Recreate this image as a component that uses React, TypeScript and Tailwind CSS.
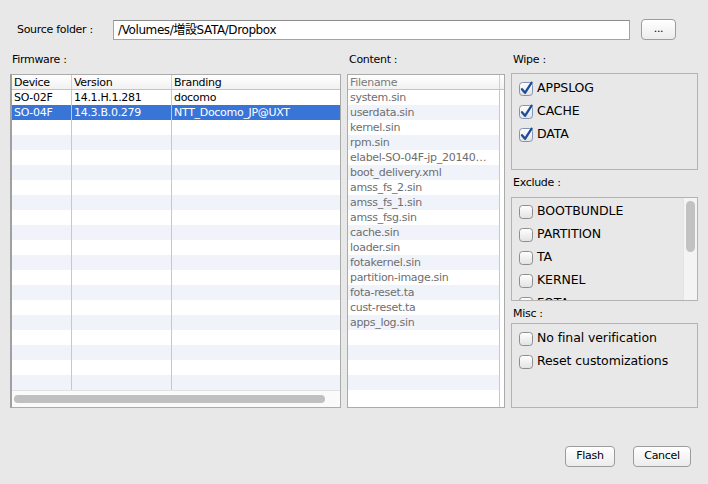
import React from "react";

const firmwareRows = [
  { device: "SO-02F", version: "14.1.H.1.281", branding: "docomo", selected: false },
  { device: "SO-04F", version: "14.3.B.0.279", branding: "NTT_Docomo_JP@UXT", selected: true },
];

const files = [
  "system.sin",
  "userdata.sin",
  "kernel.sin",
  "rpm.sin",
  "elabel-SO-04F-jp_20140…",
  "boot_delivery.xml",
  "amss_fs_2.sin",
  "amss_fs_1.sin",
  "amss_fsg.sin",
  "cache.sin",
  "loader.sin",
  "fotakernel.sin",
  "partition-image.sin",
  "fota-reset.ta",
  "cust-reset.ta",
  "apps_log.sin",
];

function CheckBox({ checked }: { checked: boolean }) {
  return (
    <svg width="16" height="16" viewBox="0 0 16 16" className="shrink-0">
      <defs>
        <linearGradient id="cbgrad" x1="0" y1="0" x2="0" y2="1">
          <stop offset="0" stopColor="#ffffff" />
          <stop offset="1" stopColor="#e2e2e2" />
        </linearGradient>
      </defs>
      <rect
        x="1.5"
        y="1.5"
        width="13"
        height="13"
        rx="3"
        fill="url(#cbgrad)"
        stroke={checked ? "#7f93b4" : "#8e8e8e"}
      />
      {checked && (
        <path
          d="M4 8.2 L7 11.8 L13.6 1.6"
          fill="none"
          stroke="#1f4c99"
          strokeWidth="2.3"
          strokeLinecap="round"
          strokeLinejoin="round"
        />
      )}
    </svg>
  );
}

function CheckRow({ label, checked }: { label: string; checked: boolean }) {
  return (
    <div className="flex items-center h-[23px] gap-[3px] text-[12.5px] tracking-[-0.1px] whitespace-nowrap">
      <CheckBox checked={checked} />
      <span>{label}</span>
    </div>
  );
}

export default function App() {
  const stripes = Array.from({ length: 20 });
  return (
    <div className="w-[708px] h-[484px] bg-[#e8e8e8] overflow-hidden font-['DejaVu_Sans','Noto_Sans_CJK_JP',sans-serif] text-[11px] tracking-[-0.3px] text-black">
      {/* Source folder row */}
      <div className="flex items-center h-[21px] mt-[19px]">
        <div className="ml-[17px] w-[96px] leading-[14px]">Source folder :</div>
        <div className="w-[517px] h-[20px] bg-white border border-[#a3a3a3] border-t-[#8c8c8c] flex items-center pl-[4px] text-[12px] tracking-[-0.4px] whitespace-nowrap">
          /Volumes/増設SATA/Dropbox
        </div>
        <div className="ml-[11px] w-[35px] h-[21px] rounded-[4px] border border-[#9c9c9c] bg-gradient-to-b from-white to-[#ececec] flex items-center justify-center leading-none pb-[3px]">
          ...
        </div>
      </div>

      {/* Main columns */}
      <div className="flex mt-[13px] ml-[10px]">
        {/* Firmware */}
        <div className="w-[331px]">
          <div className="h-[14px] leading-[14px] pl-[2px]">Firmware :</div>
          <div className="mt-[7px] h-[334px] border border-[#ababab] border-l-2 border-l-[#a0a0a0] bg-white relative overflow-hidden">
            <div className="flex h-[15px] border-b border-[#c4c4c4] bg-gradient-to-b from-white to-[#f1f1f1] leading-[15px]">
              <div className="w-[60px] pl-[2px] border-r border-[#cfcfcf]">Device</div>
              <div className="w-[100px] pl-[2px] border-r border-[#cfcfcf]">Version</div>
              <div className="flex-1 pl-[2px]">Branding</div>
            </div>
            <div className="h-[300px]">
              {stripes.map((_, i) => {
                const r = firmwareRows[i];
                const sel = r?.selected;
                const bg = sel ? "bg-[#3875d7] text-white" : i % 2 === 1 ? "bg-[#f0f4fa]" : "bg-white";
                return (
                  <div key={i} className={`flex h-[15px] leading-[15px] whitespace-nowrap ${bg}`}>
                    <div className="w-[60px] pl-[2px] border-r border-[#c8c8c8]">{r?.device ?? ""}</div>
                    <div className="w-[100px] pl-[2px] border-r border-[#c8c8c8]">{r?.version ?? ""}</div>
                    <div className="flex-1 pl-[2px]">{r?.branding ?? ""}</div>
                  </div>
                );
              })}
            </div>
            <div className="h-[17px] border-t border-[#e2e2e2] bg-[#fafafa] flex items-center pl-[2px]">
              <div className="w-[311px] h-[8px] rounded-full bg-[#c0c0c0]" />
            </div>
          </div>
        </div>

        {/* Content */}
        <div className="ml-[6px] w-[158px]">
          <div className="h-[14px] leading-[14px] pl-[2px]">Content :</div>
          <div className="mt-[7px] h-[334px] border border-[#ababab] bg-white overflow-hidden flex flex-col">
            <div className="flex h-[15px] border-b border-[#c4c4c4] bg-gradient-to-b from-white to-[#f1f1f1] leading-[15px] text-[#7a7a7a]">
              <div className="w-[152px] pl-[2px] border-r border-[#cfcfcf]">Filename</div>
              <div className="flex-1" />
            </div>
            <div className="flex flex-1">
              <div className="w-[152px] border-r border-[#c8c8c8]">
                {stripes.map((_, i) => (
                  <div
                    key={i}
                    className={`h-[15px] leading-[15px] pl-[2px] whitespace-nowrap overflow-hidden text-[#6e6e6e] ${i % 2 === 1 ? "bg-[#f0f4fa]" : "bg-white"}`}
                  >
                    {files[i] ?? ""}
                  </div>
                ))}
              </div>
              <div className="flex-1 bg-white" />
            </div>
          </div>
        </div>

        {/* Right column */}
        <div className="ml-[6px] w-[187px]">
          <div className="h-[14px] leading-[14px] pl-[2px]">Wipe :</div>
          <div className="mt-[6px] h-[97px] border border-[#b3b3b3] pl-[6px] pt-[3px]">
            <CheckRow label="APPSLOG" checked />
            <CheckRow label="CACHE" checked />
            <CheckRow label="DATA" checked />
          </div>

          <div className="mt-[6px] h-[14px] leading-[14px] pl-[2px]">Exclude :</div>
          <div className="mt-[7px] h-[104px] border border-[#b3b3b3] relative overflow-hidden">
            <div className="pl-[6px] pt-[2px]">
              <CheckRow label="BOOTBUNDLE" checked={false} />
              <CheckRow label="PARTITION" checked={false} />
              <CheckRow label="TA" checked={false} />
              <CheckRow label="KERNEL" checked={false} />
              <CheckRow label="FOTA" checked={false} />
            </div>
            <div className="absolute top-0 right-0 w-[14px] h-full bg-[#f4f4f4] border-l border-[#e4e4e4]">
              <div className="ml-[2px] mt-[3px] w-[9px] h-[51px] rounded-full bg-[#c2c2c2]" />
            </div>
          </div>

          <div className="mt-[6px] h-[14px] leading-[14px] pl-[2px]">Misc :</div>
          <div className="mt-[2px] h-[85px] border border-[#b3b3b3] pl-[6px] pt-[3px]">
            <CheckRow label="No final verification" checked={false} />
            <CheckRow label="Reset customizations" checked={false} />
          </div>
        </div>
      </div>

      {/* Buttons */}
      <div className="flex justify-end gap-[18px] pr-[17px] mt-[38px]">
        <div className="w-[50px] h-[21px] rounded-[4px] border border-[#9c9c9c] bg-gradient-to-b from-white to-[#ececec] flex items-center justify-center">
          Flash
        </div>
        <div className="w-[58px] h-[21px] rounded-[4px] border border-[#9c9c9c] bg-gradient-to-b from-white to-[#ececec] flex items-center justify-center">
          Cancel
        </div>
      </div>
    </div>
  );
}
